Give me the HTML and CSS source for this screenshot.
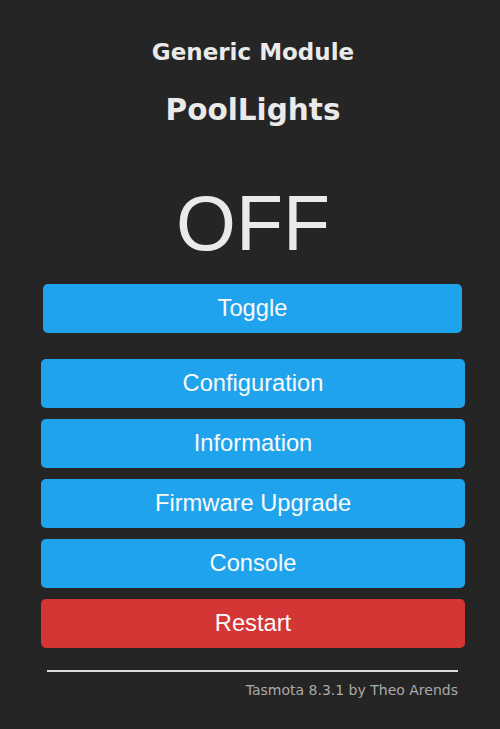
FILE: index.html
```html
<!DOCTYPE html>
<html>
<head>
<meta charset="utf-8">
<link rel="stylesheet" href="styles.css">
</head>
<body>
<div class="main">
  <div class="head">
    <h3 class="module">Generic Module</h3>
    <h2 class="device">PoolLights</h2>
  </div>
  <div class="state">OFF</div>
  <div class="toggle-row"><button class="btn toggle">Toggle</button></div>
  <div class="menu">
    <button class="btn">Configuration</button>
    <button class="btn">Information</button>
    <button class="btn">Firmware Upgrade</button>
    <button class="btn">Console</button>
    <button class="btn red">Restart</button>
  </div>
  <hr class="rule">
  <div class="footer">Tasmota 8.3.1 by Theo Arends</div>
</div>
</body>
</html>
```

FILE: styles.css
```css
html, body {
  margin: 0;
  padding: 0;
  background: #252525;
  height: 100%;
}
.main {
  width: 424px;
  margin-left: 41px;
  color: #eaeaea;
  font-family: "DejaVu Sans", Verdana, sans-serif;
}
.head {
  text-align: center;
  padding-top: 36px;
}
.module {
  margin: 0;
  font-size: 23px;
  line-height: 32px;
  font-weight: bold;
}
.device {
  margin: 24px 0 0;
  font-size: 29.5px;
  line-height: 36px;
  font-weight: bold;
}
.state {
  font-family: "Liberation Sans", Arial, sans-serif;
  text-align: center;
  font-size: 77px;
  line-height: 90px;
  margin-top: 50px;
}
.toggle-row {
  padding: 0 3px 0 2px;
  margin-top: 16px;
}
.btn {
  display: block;
  width: 100%;
  height: 49px;
  border: 0;
  border-radius: 5px;
  background: #1fa3ec;
  color: #fafafa;
  font-family: "Liberation Sans", Arial, sans-serif;
  font-size: 23.7px;
  padding: 0;
}
.menu {
  margin-top: 26px;
  display: flex;
  flex-direction: column;
  gap: 11px;
}
.btn.red {
  background: #d43535;
}
.rule {
  margin: 22px 7px 0 6px;
  border: 0;
  height: 2px;
  background: #dcdcdc;
}
.footer {
  text-align: right;
  margin-right: 7px;
  margin-top: 10px;
  font-size: 14px;
  color: #aaa;
}
```
